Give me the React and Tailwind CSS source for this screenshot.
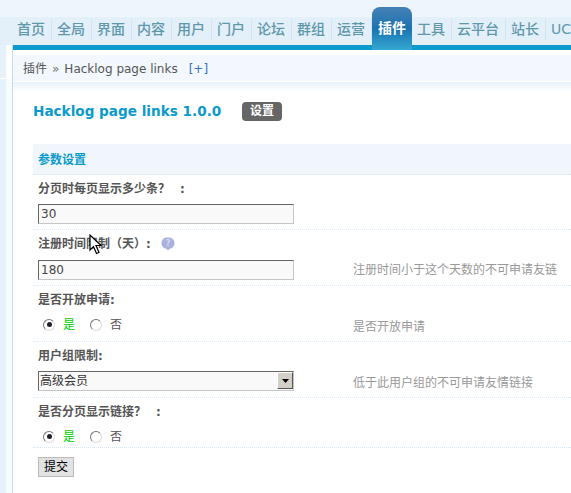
import React from "react";

const FONT = "[font-family:'DejaVu_Sans','Noto_Sans_CJK_SC',sans-serif]";

const navItems = ["首页", "全局", "界面", "内容", "用户", "门户", "论坛", "群组", "运营", "插件", "工具", "云平台", "站长", "UC"];

function NavItem({ label }) {
  if (label === "插件") {
    return (
      <div className="w-[40px] h-[43px] -mt-[10px] mb-[-5px] shrink-0 rounded-t-[8px] bg-gradient-to-b from-[#4480b6] via-[#1a73b0] to-[#35a8d2] flex items-center justify-center text-white font-bold text-[14px] z-10">
        {label}
      </div>
    );
  }
  return (
    <div className="shrink-0 h-[28px] flex items-center pb-[3px] pl-[5px] text-[#5f97ab] font-medium text-[14px] whitespace-nowrap">
      <span className="pr-[6px] border-r border-[#d5e3ee]">{label}</span>
    </div>
  );
}

function Radio({ checked }) {
  return (
    <span className="w-[12px] h-[12px] rounded-full border-[1.5px] border-[#777] border-b-[#ddd] border-r-[#ddd] bg-white flex items-center justify-center shrink-0">
      {checked && <span className="w-[5px] h-[5px] rounded-full bg-[#222]" />}
    </span>
  );
}

function YesNo({ top }) {
  return (
    <div className={`flex items-center pl-[5px] text-[12px] ${top}`}>
      <span className="ml-[5px]"><Radio checked /></span>
      <span className="ml-[8px] pt-[1px] text-[#00d000]">是</span>
      <span className="ml-[15px]"><Radio /></span>
      <span className="ml-[8px] pt-[1px] text-[#555]">否</span>
    </div>
  );
}

function Row({ label, help, hint, hintTop = "pt-[5px]", height, children }) {
  return (
    <div className="border-b border-dotted border-[#d5e6f2]">
      <div className="h-[27px] pl-[5px] pt-[1px] flex items-center gap-[10px] text-[12px] font-bold text-[#555]">
        <span>{label}</span>
        {help && (
          <svg width="14" height="14" viewBox="0 0 14 14">
            <path d="M7 0.5c4 0 6.500 2 6.500 5.500s-2.500 5.500-4.500 5.500l-2 2-2-2c-2 0-4.500-2-4.500-5.500S3 0.500 7 0.500z" fill="#a9b1de" />
            <text x="7" y="9" textAnchor="middle" fontSize="8" fontWeight="700" fill="#dde">?</text>
          </svg>
        )}
      </div>
      <div className={`${height} flex`}>
        <div className="w-[320px] shrink-0">{children}</div>
        <div className={`text-[12px] text-[#999] whitespace-nowrap ${hintTop}`}>{hint}</div>
      </div>
    </div>
  );
}

function TextInput({ value, top }) {
  return (
    <div className={`pl-[5px] ${top}`}>
      <input
        readOnly
        value={value}
        className="block w-[256px] h-[20px] bg-[#f9f9f9] border border-[#c6c6c6] border-t-[#666] border-l-[#666] px-[2px] text-[12px] text-[#444] outline-none"
      />
    </div>
  );
}

export default function App() {
  return (
    <div className={`relative w-[571px] h-[493px] overflow-hidden bg-white ${FONT}`}>
      {/* top nav */}
      <div className="h-[45px] bg-[#eef5fc] pt-[17px]">
        <div className="h-[28px] bg-[#e3eff9] pl-[12px] flex">
          {navItems.map((item) => (
            <NavItem key={item} label={item} />
          ))}
        </div>
      </div>

      <div className="flex h-[448px]">
        {/* left menu edge */}
        <div className="w-[13px] shrink-0 border-r border-[#c3dbea] flex flex-col">
          <div className="h-[33px] flex">
            <div className="w-[6px] bg-[#e6f1fa]" />
            <div className="w-[6px] bg-white" />
          </div>
          <div className="h-[1px] bg-white" />
          <div className="flex-1 flex">
            <div className="w-[6px] bg-[#e6f2fb]" />
            <div className="w-[6px] bg-[#f6fbfe]" />
          </div>
        </div>

        <div className="flex-1 min-w-0">
          <div className="h-[5px] bg-[#0a9acb]" />
          <div className="h-[5px] bg-white" />
          <div className="h-[26px] bg-[#f2f8fd] pl-[10px] pt-[1px] flex items-center text-[12px] text-[#555]">
            <span>插件</span>
            <span className="mx-[5px] text-[#777]">»</span>
            <span className="mr-[1px]">Hacklog page links</span>
            <span className="ml-[10px] text-[#3a6fc0]">[+]</span>
          </div>
          <div className="h-[1px] bg-white" />
          <div className="h-[10px] bg-gradient-to-b from-[#e9f2fa] to-white" />

          <div className="pl-[20px]">
            <div className="h-[28px] mt-[5px] flex items-center">
              <h1 className="text-[13.6px] font-bold text-[#0a9acb] w-[209px]">Hacklog page links 1.0.0</h1>
              <span className="w-[40px] h-[19px] rounded-[4px] bg-[#666] text-white text-[12px] font-bold flex items-center justify-center">设置</span>
            </div>

            <div className="h-[31px] mt-[19px] bg-[#f0f6fc] border-b border-dotted border-[#d5e6f2] pl-[5px] pt-[1px] flex items-center text-[12px] font-bold text-[#0a9acb]">
              参数设置
            </div>

            <Row label={<>分页时每页显示多少条？<span className="ml-[10px]">:</span></>} height="h-[27px]">
              <TextInput value="30" top="pt-[2px]" />
            </Row>
            <Row label="注册时间限制（天）:" help hint="注册时间小于这个天数的不可申请友链" hintTop="pt-[4px]" height="h-[28px]">
              <TextInput value="180" top="pt-[3px]" />
            </Row>
            <Row label="是否开放申请:" hint="是否开放申请" height="h-[28px]">
              <YesNo top="pt-[2px]" />
            </Row>
            <Row label="用户组限制:" hint="低于此用户组的不可申请友情链接" height="h-[28px]">
              <div className="pl-[5px] pt-[2px]">
                <div className="relative w-[256px] h-[20px]">
                  <select className="block w-full h-full appearance-none bg-[#f9f9f9] border border-[#c6c6c6] border-t-[#666] border-l-[#666] pl-[1px] text-[12px] text-[#333] outline-none rounded-none">
                    <option>高级会员</option>
                  </select>
                  <span className="absolute right-[1px] top-[1px] w-[16px] h-[17px] bg-[#d4d0c8] border border-[#fff] border-r-[#555] border-b-[#555] flex items-center justify-center">
                    <svg width="7" height="4" viewBox="0 0 7 4">
                      <path d="M0 0h7L3.500 4z" fill="#000" />
                    </svg>
                  </span>
                </div>
              </div>
            </Row>
            <Row label={<>是否分页显示链接？<span className="ml-[10px]">:</span></>} height="h-[22px]">
              <YesNo top="pt-[2px]" />
            </Row>

            <div className="pl-[5px] pt-[9px]">
              <button className="block w-[36px] h-[20px] bg-[#e2e2e2] border border-[#fff] border-r-[#555] border-b-[#555] outline outline-1 outline-[#bbb] -outline-offset-1 text-[12px] text-black leading-none">
                提交
              </button>
            </div>
          </div>
        </div>
      </div>

      {/* mouse pointer caught in the screenshot */}
      <svg className="absolute left-[89px] top-[234px]" width="14" height="22" viewBox="0 0 14 22">
        <path d="M1 1v15l3.500-3.500 3 7 2.500-1-3-7h5z" fill="#fff" stroke="#000" strokeWidth="1.200" />
      </svg>
    </div>
  );
}
